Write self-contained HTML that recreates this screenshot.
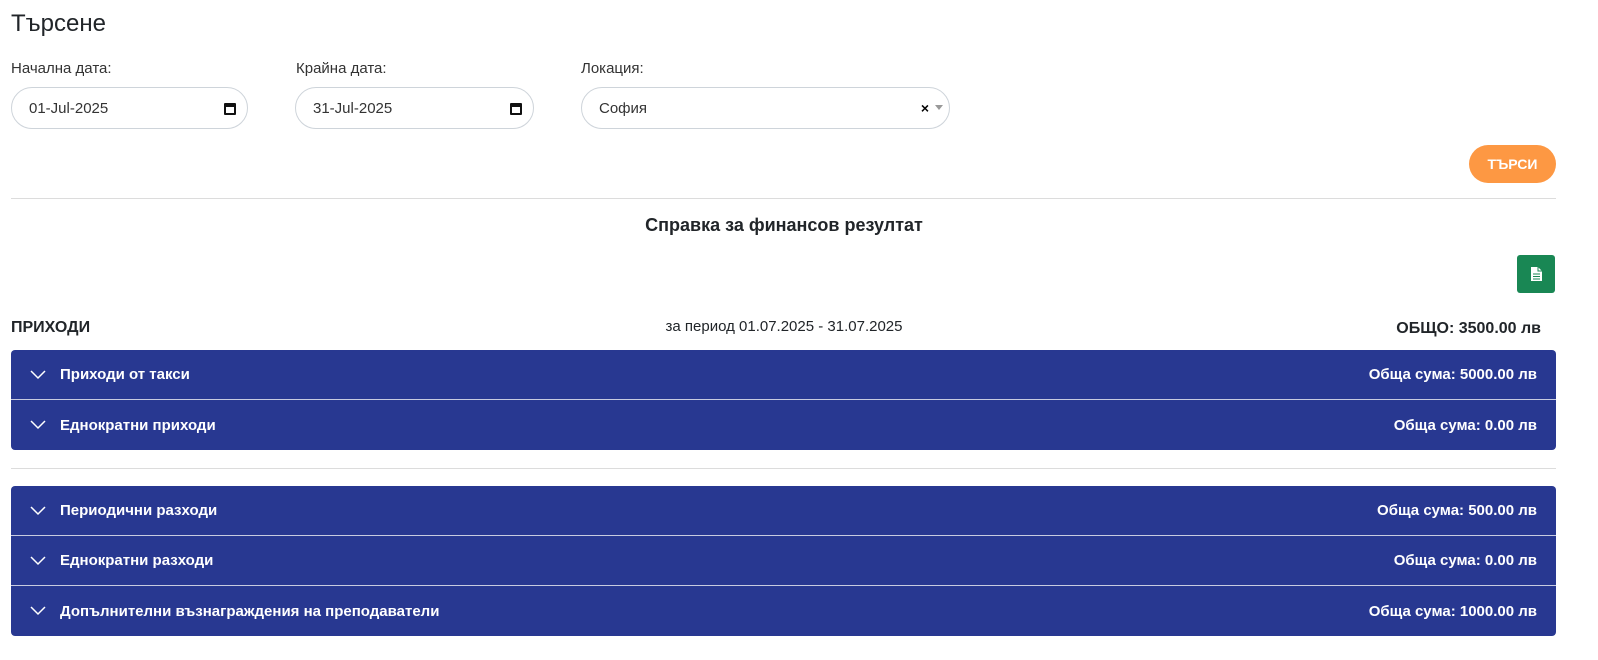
<!DOCTYPE html>
<html><head><meta charset="utf-8"><style>
*{box-sizing:border-box;margin:0;padding:0}
body{width:1598px;height:660px;background:#fff;font-family:"Liberation Sans",sans-serif;color:#212529;position:relative;overflow:hidden}
.a{position:absolute}
h1{position:absolute;left:11px;top:10px;font-size:24px;font-weight:400;color:#212529}
.lbl{font-size:15px;color:#333;top:60px}
.inp{top:87px;height:42px;border:1px solid #ced4da;border-radius:21px;font-size:15px;color:#333;padding:0 0 0 18px;line-height:42px}
.cal{position:absolute;right:11px;top:15px;width:12px;height:12px;border:2px solid #111;border-top-width:4px;border-radius:1px}
.btn{left:1469px;top:145px;width:87px;height:38px;background:#fd9843;border-radius:19px;color:#fff;font-weight:700;font-size:14px;text-align:center;line-height:38px}
.hr{left:11px;width:1545px;height:1px;background:#dcdcdc}
.grp{left:11px;width:1545px;background:#283891;border-radius:4px;overflow:hidden}
.row{height:50px;border-bottom:1px solid #c8cbe0;color:#fff;font-weight:700;font-size:15px;display:flex;align-items:center;padding:0 19px 0 19px;position:relative}
.row:last-child{border-bottom:none}
.row svg{margin-right:14px}
.row .r{margin-left:auto}
</style></head><body>
<h1>Търсене</h1>
<div class="a lbl" style="left:11px">Начална дата:</div>
<div class="a lbl" style="left:296px">Крайна дата:</div>
<div class="a lbl" style="left:581px">Локация:</div>
<div class="a inp" style="left:11px;width:237px;padding-left:17px">01-Jul-2025<span class="cal"></span></div>
<div class="a inp" style="left:295px;width:239px;padding-left:17px">31-Jul-2025<span class="cal"></span></div>
<div class="a inp" style="left:581px;width:369px;padding-left:17px">София<span style="position:absolute;right:20px;top:0;line-height:40px;font-weight:700;color:#000;font-size:14px">×</span><span style="position:absolute;right:6px;top:17px;width:0;height:0;border:4px solid transparent;border-top:5px solid #999"></span></div>
<div class="a btn">ТЪРСИ</div>
<div class="a hr" style="top:198px"></div>
<div class="a" style="left:0;width:1568px;top:215px;text-align:center;font-size:18px;font-weight:700;color:#212529">Справка за финансов резултат</div>
<div class="a" style="left:1517px;top:255px;width:38px;height:38px;background:#198754;border-radius:3px">
<svg width="38" height="38" viewBox="0 0 38 38"><path d="M14 12h7l4 4v10h-11z" fill="#fff"/><path d="M21 12v4h4" fill="none" stroke="#198754" stroke-width="1"/><path d="M16 19h7M16 21.5h7M16 24h7" stroke="#198754" stroke-width="1"/></svg></div>
<div class="a" style="left:11px;top:319px;font-size:16px;font-weight:700">ПРИХОДИ</div>
<div class="a" style="left:0;width:1568px;top:318px;text-align:center;font-size:15px">за период 01.07.2025 - 31.07.2025</div>
<div class="a" style="right:57px;top:320px;font-size:16px;font-weight:700">ОБЩО: 3500.00 лв</div>
<div class="a grp" style="top:350px">
<div class="row"><svg width="16" height="10" viewBox="0 0 16 10"><path d="M1 1l7 7 7-7" fill="none" stroke="#fff" stroke-width="1.5"/></svg>Приходи от такси<span class="r">Обща сума: 5000.00 лв</span></div>
<div class="row"><svg width="16" height="10" viewBox="0 0 16 10"><path d="M1 1l7 7 7-7" fill="none" stroke="#fff" stroke-width="1.5"/></svg>Еднократни приходи<span class="r">Обща сума: 0.00 лв</span></div>
</div>
<div class="a hr" style="top:468px"></div>
<div class="a grp" style="top:486px">
<div class="row"><svg width="16" height="10" viewBox="0 0 16 10"><path d="M1 1l7 7 7-7" fill="none" stroke="#fff" stroke-width="1.5"/></svg>Периодични разходи<span class="r">Обща сума: 500.00 лв</span></div>
<div class="row"><svg width="16" height="10" viewBox="0 0 16 10"><path d="M1 1l7 7 7-7" fill="none" stroke="#fff" stroke-width="1.5"/></svg>Еднократни разходи<span class="r">Обща сума: 0.00 лв</span></div>
<div class="row"><svg width="16" height="10" viewBox="0 0 16 10"><path d="M1 1l7 7 7-7" fill="none" stroke="#fff" stroke-width="1.5"/></svg>Допълнителни възнаграждения на преподаватели<span class="r">Обща сума: 1000.00 лв</span></div>
</div>
</body></html>
